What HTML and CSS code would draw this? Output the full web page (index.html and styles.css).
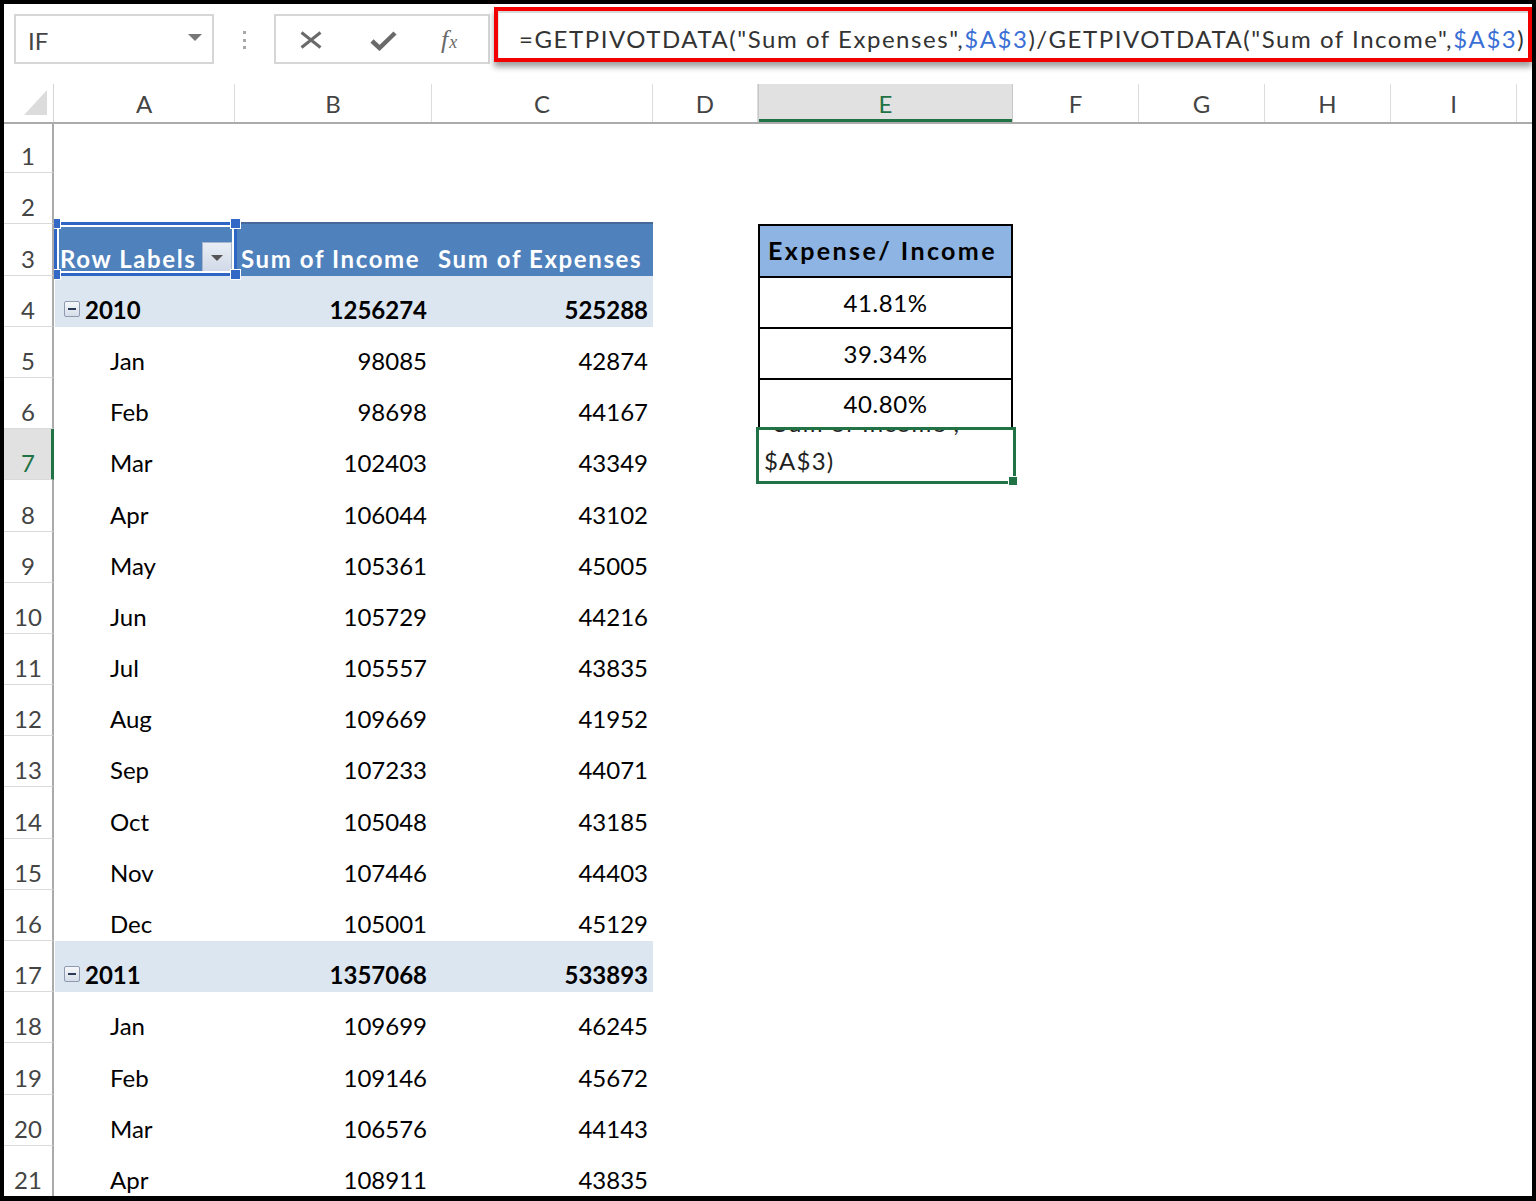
FILE: index.html
```html
<!DOCTYPE html>
<html>
<head>
<meta charset="utf-8">
<link rel="stylesheet" href="styles.css">
</head>
<body>
<div class="frame">
  <div class="toolbar">
    <div class="namebox"><span>IF</span><svg class="nbarrow" width="14" height="7" viewBox="0 0 14 7"><polygon points="0,0 14,0 7,7" fill="#777"/></svg></div>
    <div class="dots"><i></i><i></i><i></i></div>
    <div class="fbtns">
      <svg class="ico-x" width="22" height="18" viewBox="0 0 22 18"><path d="M1.5 1.5 L20.5 16.5 M20.5 1.5 L1.5 16.5" stroke="#6a6a6a" stroke-width="3" fill="none"/></svg>
      <svg class="ico-ok" width="27" height="21" viewBox="0 0 27 21"><path d="M2 11 L9.5 18 L25 3" stroke="#6a6a6a" stroke-width="4.5" fill="none"/></svg>
      <span class="fx"><span class="fx-f">f</span><span class="fx-x">x</span></span>
    </div>
    <div class="fbox">
      <div class="finner"><span class="ftext">=GETPIVOTDATA("Sum of Expenses",<span class="ref">$A$3</span>)/GETPIVOTDATA("Sum of Income",<span class="ref">$A$3</span>)</span></div>
    </div>
  </div>

  <div class="sheet">
    <div class="colhdr">
      <div class="corner"><svg width="23" height="25" viewBox="0 0 23 25"><polygon points="23,0 23,25 0,25" fill="#dcdcdc"/></svg></div>
      <div class="ch wa">A</div>
      <div class="ch wb">B</div>
      <div class="ch wc">C</div>
      <div class="ch wd">D</div>
      <div class="ch we sel">E</div>
      <div class="ch wf">F</div>
      <div class="ch wf">G</div>
      <div class="ch wf">H</div>
      <div class="ch wf">I</div>
      <div class="ch wj"></div>
    </div>

    <div class="row r1"><div class="rh">1</div></div>
    <div class="row"><div class="rh">2</div></div>
    <div class="row">
      <div class="rh">3</div>
      <div class="c wa ph phA">Row Labels<span class="dd"><svg width="12" height="6" viewBox="0 0 12 6"><polygon points="0,0 12,0 6,6" fill="#555"/></svg></span>
        <div class="asel"><i class="hd tl"></i><i class="hd tr"></i><i class="hd bl"></i><i class="hd br"></i></div>
      </div>
      <div class="c wb ph">Sum of Income</div>
      <div class="c wc ph">Sum of Expenses</div>
      <div class="c wd"></div>
      <div class="c we et eh">Expense/ Income</div>
    </div>
    <div class="row yr">
      <div class="rh">4</div>
      <div class="c wa yl"><span class="mb"></span>2010</div>
      <div class="c wb num">1256274</div>
      <div class="c wc num">525288</div>
      <div class="c wd"></div>
      <div class="c we et ev">41.81%</div>
    </div>
    <div class="row">
      <div class="rh">5</div>
      <div class="c wa mo">Jan</div>
      <div class="c wb num">98085</div>
      <div class="c wc num">42874</div>
      <div class="c wd"></div>
      <div class="c we et ev">39.34%</div>
    </div>
    <div class="row">
      <div class="rh">6</div>
      <div class="c wa mo">Feb</div>
      <div class="c wb num">98698</div>
      <div class="c wc num">44167</div>
      <div class="c wd"></div>
      <div class="c we et ev elast">40.80%</div>
    </div>
    <div class="row">
      <div class="rh sel">7</div>
      <div class="c wa mo">Mar</div>
      <div class="c wb num">102403</div>
      <div class="c wc num">43349</div>
      <div class="c wd"></div>
      <div class="c we edit">
        <div class="etext"><div>"Sum of Income",</div><div>$A$3)</div></div>
        <div class="active"></div>
        <i class="fillh"></i>
      </div>
    </div>
    <div class="row"><div class="rh">8</div><div class="c wa mo">Apr</div><div class="c wb num">106044</div><div class="c wc num">43102</div></div>
    <div class="row"><div class="rh">9</div><div class="c wa mo">May</div><div class="c wb num">105361</div><div class="c wc num">45005</div></div>
    <div class="row"><div class="rh">10</div><div class="c wa mo">Jun</div><div class="c wb num">105729</div><div class="c wc num">44216</div></div>
    <div class="row"><div class="rh">11</div><div class="c wa mo">Jul</div><div class="c wb num">105557</div><div class="c wc num">43835</div></div>
    <div class="row"><div class="rh">12</div><div class="c wa mo">Aug</div><div class="c wb num">109669</div><div class="c wc num">41952</div></div>
    <div class="row"><div class="rh">13</div><div class="c wa mo">Sep</div><div class="c wb num">107233</div><div class="c wc num">44071</div></div>
    <div class="row"><div class="rh">14</div><div class="c wa mo">Oct</div><div class="c wb num">105048</div><div class="c wc num">43185</div></div>
    <div class="row"><div class="rh">15</div><div class="c wa mo">Nov</div><div class="c wb num">107446</div><div class="c wc num">44403</div></div>
    <div class="row"><div class="rh">16</div><div class="c wa mo">Dec</div><div class="c wb num">105001</div><div class="c wc num">45129</div></div>
    <div class="row yr"><div class="rh">17</div><div class="c wa yl"><span class="mb"></span>2011</div><div class="c wb num">1357068</div><div class="c wc num">533893</div></div>
    <div class="row"><div class="rh">18</div><div class="c wa mo">Jan</div><div class="c wb num">109699</div><div class="c wc num">46245</div></div>
    <div class="row"><div class="rh">19</div><div class="c wa mo">Feb</div><div class="c wb num">109146</div><div class="c wc num">45672</div></div>
    <div class="row"><div class="rh">20</div><div class="c wa mo">Mar</div><div class="c wb num">106576</div><div class="c wc num">44143</div></div>
    <div class="row"><div class="rh">21</div><div class="c wa mo">Apr</div><div class="c wb num">108911</div><div class="c wc num">43835</div></div>
  </div>
</div>
</body>
</html>
```

FILE: styles.css
```css
* { box-sizing: border-box; }
html, body { margin: 0; padding: 0; background: #000; }
body { font-family: Lato, "Liberation Sans", sans-serif; }

.frame {
  margin: 4px 4px 0 4px;
  width: 1528px;
  height: 1192px;
  background: #fff;
  overflow: hidden;
  position: relative;
}

/* ---------- formula bar ---------- */
.toolbar { height: 80px; display: flex; align-items: flex-start; }
.namebox {
  margin: 10px 0 0 10px;
  width: 200px; height: 50px;
  border: 2px solid #d6d6d6;
  display: flex; align-items: center; justify-content: space-between;
  padding: 2px 10px 0 12px;
  font-size: 24px; color: #444;
}
.nbarrow { margin-top: -6px; }
.dots { margin: 27px 0 0 28.5px; width: 3px; display: flex; flex-direction: column; gap: 4.5px; }
.dots i { display: block; width: 3px; height: 3px; background: #a8a8a8; }
.fbtns {
  margin: 10px 0 0 28.5px;
  width: 216px; height: 50px;
  border: 2px solid #d6d6d6;
  display: flex; align-items: center;
  padding-left: 24px;
}
.ico-x { margin-top: 2px; }
.ico-ok { margin-left: 48px; margin-top: 2px; }
.fx { margin-left: 44px; font-family: "Liberation Serif", serif; font-style: italic; color: #6a6a6a; margin-top: 2px; }
.fx-f { font-size: 26px; }
.fx-x { font-size: 18px; margin-left: 1px; }

.fbox {
  margin: 3px 0 0 4px;
  width: 1038px; height: 55px;
  border: 4px solid #f20000;
  box-shadow: 0 5px 6px rgba(0,0,0,0.38);
  background: #fff;
}
.finner {
  height: 100%;
  border-top: 2px solid #d9d9d9;
  border-left: 1px solid #e4e4e4;
  display: flex; align-items: center;
  padding: 5px 0 0 20px;
  white-space: nowrap;
}
.ftext { font-size: 24px; color: #333; letter-spacing: 1.55px; }
.ref { color: #3a6fd6; }

/* ---------- sheet ---------- */
.sheet { display: flex; flex-direction: column; }
.colhdr {
  display: flex; height: 40px;
  border-bottom: 2px solid #ababab;
}
.corner {
  width: 50px; height: 100%;
  border-right: 1px solid #d4d4d4;
  display: flex; align-items: flex-start; justify-content: flex-end;
  padding: 6px 6px 0 0;
}
.ch {
  height: 100%;
  border-right: 1px solid #dcdcdc;
  display: flex; align-items: center; justify-content: center;
  font-size: 24px; color: #444; line-height: 29px;
}
.ch.sel {
  background: #e1e1e1; color: #217346;
  box-shadow: inset 0 -3px 0 #217346;
  border-left: 1px solid #c8c8c8; border-right: 1px solid #c8c8c8;
}
.wa { width: 181px; }
.wb { width: 197px; }
.wc { width: 221px; }
.wd { width: 105px; }
.we { width: 255px; }
.wf { width: 126px; }
.wj { flex: 1; border-right: none; }

.row { display: flex; height: 51.2px; flex-shrink: 0; }
.row.r1 { height: 49.2px; }
.rh {
  width: 50px; flex-shrink: 0;
  background: #fff;
  position: relative; z-index: 3;
  border-right: 2px solid #ababab;
  border-bottom: 1px solid #dadada;
  display: flex; align-items: flex-end; justify-content: center;
  padding-bottom: 2px;
  font-size: 24px; line-height: 29px; color: #444;
}
.rh.sel { background: #e1e1e1; color: #217346; border-right: 3px solid #217346; padding-left: 1px; }

.c {
  flex-shrink: 0;
  display: flex; align-items: flex-end;
  padding: 0 5px 3px 6px;
  font-size: 24px; line-height: 29px; color: #000;
  white-space: nowrap;
}
.num { justify-content: flex-end; }
.mo { padding-left: 56px; }

/* pivot header */
.ph {
  background: #4f81bd; color: #fff; font-weight: 700;
  letter-spacing: 1.6px;
  box-shadow: 0 -2px 0 #45699b;
}
.phA { position: relative; margin-left: 1px; width: 180px; padding-left: 5px; }
.dd {
  margin-left: auto; margin-right: -2px; margin-bottom: -1px;
  width: 30px; height: 32px;
  background: linear-gradient(#e9eef5, #cfd8e7);
  border: 1px solid #a9b5ca;
  display: flex; align-items: center; justify-content: center;
}
.asel {
  position: absolute; left: -1px; top: -2px;
  width: 183px; height: 54px;
  border: 3px solid #2f66c5;
  box-shadow: inset 0 0 0 2px #fff;
  z-index: 2;
}
.hd { position: absolute; width: 11px; height: 11px; background: #3468c6; border: 1px solid #fff; }
.hd.tl { left: -7px; top: -7px; }
.hd.tr { right: -7px; top: -7px; }
.hd.bl { left: -7px; bottom: -7px; }
.hd.br { right: -7px; bottom: -7px; }

/* year rows */
.yr .wa, .yr .wb, .yr .wc { background: #dce6f1; font-weight: 700; }
.yr .wa { margin-left: 1px; width: 180px; }
.yl { padding-left: 9px; }
.mb {
  position: relative;
  width: 16px; height: 16px;
  margin: 0 5px 7px 0;
  border: 1px solid #8e9ab0; border-radius: 2px;
  background: linear-gradient(#f6f8fb, #d6dde8);
}
.mb::after {
  content: ""; position: absolute; left: 3px; top: 6px;
  width: 8px; height: 2px; background: #2b3a55;
}

/* E table */
.et {
  border-left: 2px solid #000; border-right: 2px solid #000; border-top: 2px solid #000;
  justify-content: center; align-items: center;
  padding: 0;
}
.ev { letter-spacing: 0.6px; }
.elast { border-bottom: 2px solid #000; }
.eh { background: #8db4e2; font-weight: 700; padding-right: 6px; font-size: 25px; letter-spacing: 2.4px; }
.edit { position: relative; padding: 0; }
.etext {
  width: 100%; height: 100%;
  overflow: hidden;
  display: flex; flex-direction: column; justify-content: flex-end;
  padding: 0 0 0 6px;
  line-height: 38px; color: #222;
  letter-spacing: 1.2px;
}
.active {
  position: absolute; left: -2px; top: -2px; right: -3px; bottom: -4px;
  border: 3px solid #217346;
}
.fillh {
  position: absolute; right: -5px; bottom: -6px;
  width: 10px; height: 10px;
  background: #217346; border: 1px solid #fff;
}
```
